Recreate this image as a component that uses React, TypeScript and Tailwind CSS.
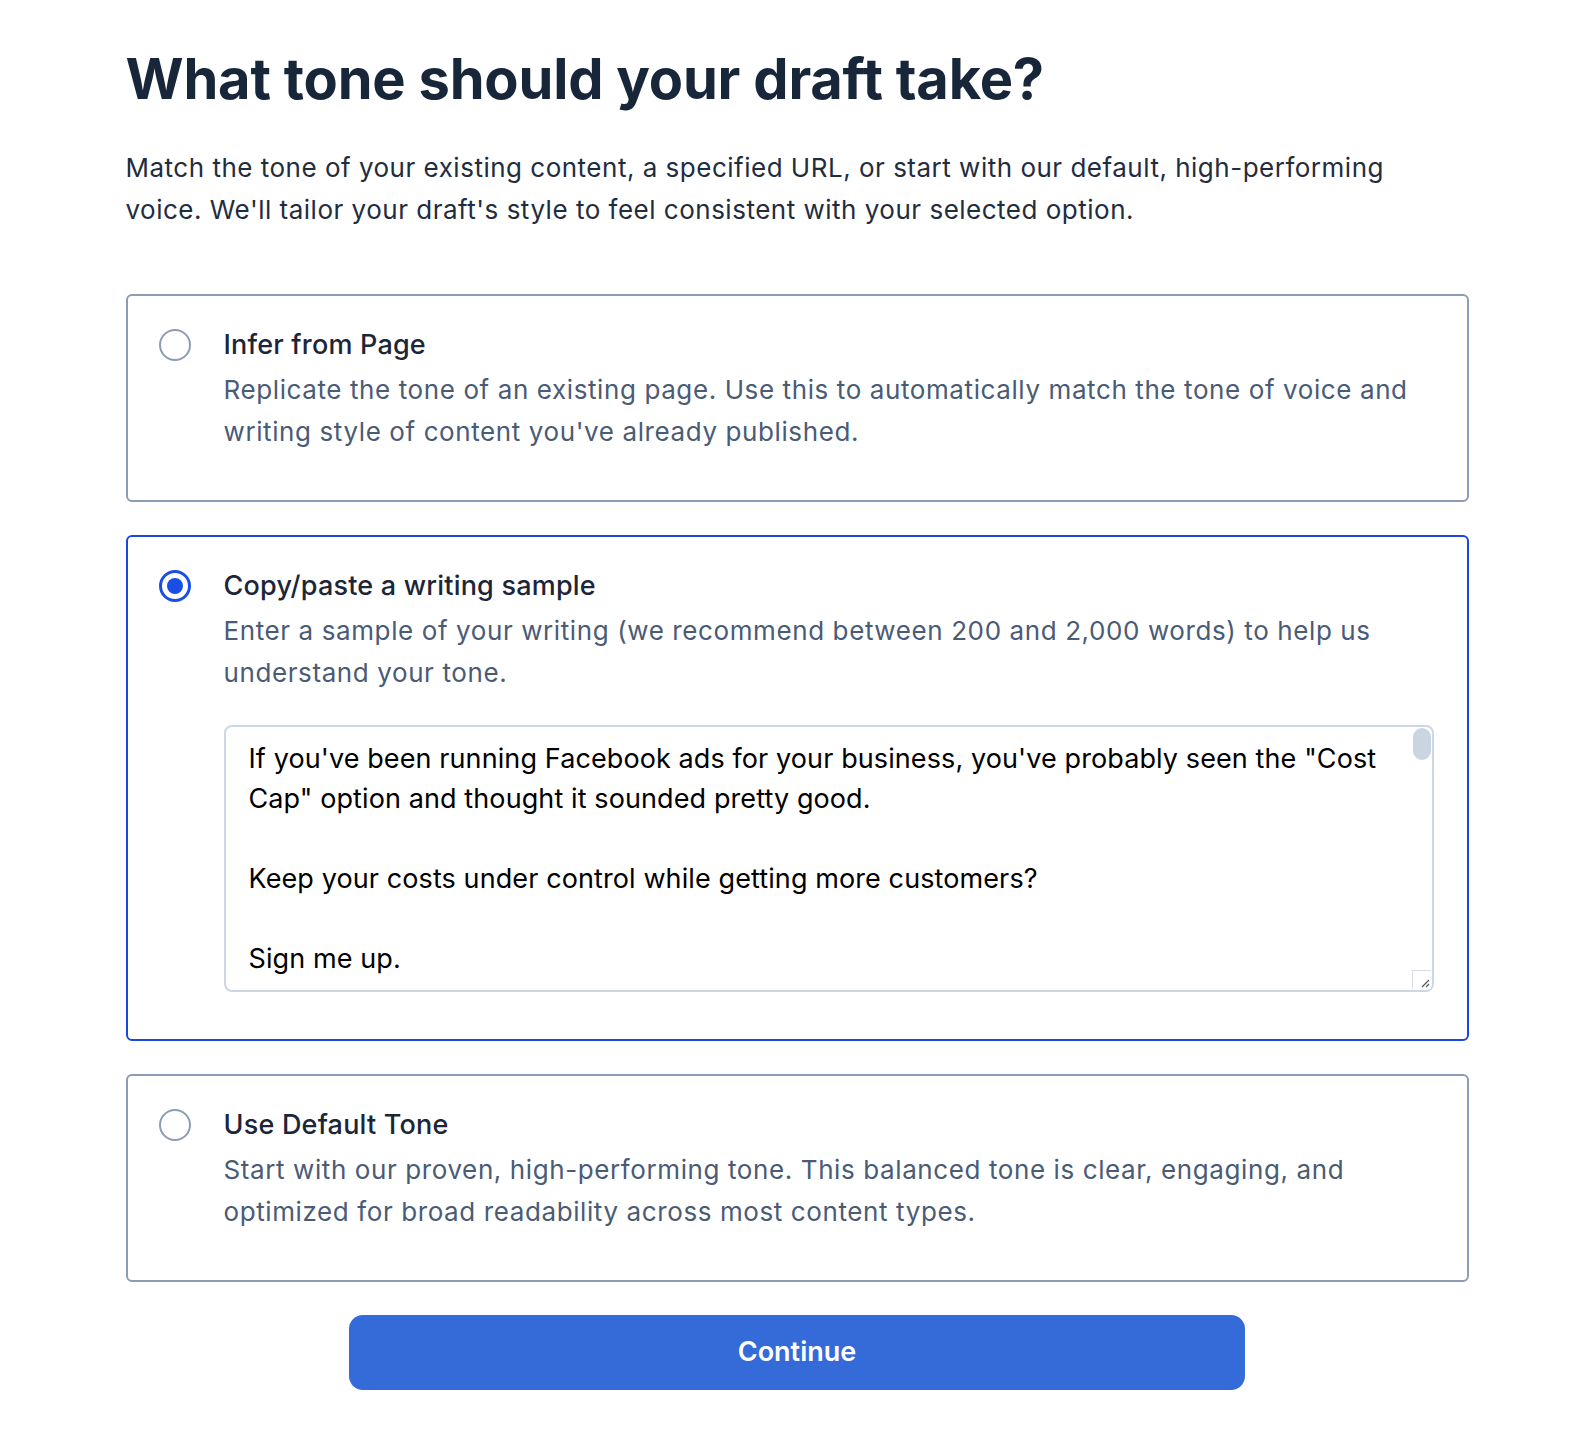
import React, { useState } from 'react';

const options = [
  {
    id: 'page',
    title: 'Infer from Page',
    desc: "Replicate the tone of an existing page. Use this to automatically match the tone of voice and writing style of content you've already published.",
  },
  {
    id: 'sample',
    title: 'Copy/paste a writing sample',
    desc: 'Enter a sample of your writing (we recommend between 200 and 2,000 words) to help us understand your tone.',
  },
  {
    id: 'default',
    title: 'Use Default Tone',
    desc: 'Start with our proven, high-performing tone. This balanced tone is clear, engaging, and optimized for broad readability across most content types.',
  },
];

const sampleText = `If you've been running Facebook ads for your business, you've probably seen the "Cost Cap" option and thought it sounded pretty good.

Keep your costs under control while getting more customers?

Sign me up.

But here's the thing most people don't realize until it's too late.`;

function Radio({ checked }: { checked: boolean }) {
  return checked ? (
    <span className="flex h-[32px] w-[32px] shrink-0 items-center justify-center rounded-full border-[3px] border-[#1a4ee6]">
      <span className="h-[16px] w-[16px] rounded-full bg-[#1a4ee6]" />
    </span>
  ) : (
    <span className="h-[32px] w-[32px] shrink-0 rounded-full border-2 border-[#8d9cb6]" />
  );
}

export default function App() {
  const [selected, setSelected] = useState('sample');

  return (
    <div className="min-h-screen bg-white font-['Inter',sans-serif]">
      <main className="mx-auto w-[1343px] pt-[46px] pb-10 relative left-[3px]">
        <h1 className="text-[56px] leading-[66px] font-bold tracking-[-0.2px] text-[#18263a]">
          What tone should your draft take?
        </h1>
        <p className="mt-[35px] max-w-[1300px] text-[26px] leading-[42px] tracking-[0.5px] text-[#1f2d40]">
          Match the tone of your existing content, a specified URL, or start with our default, high-performing voice. We'll tailor your draft's style to feel consistent with your selected option.
        </p>

        <div className="mt-[63px] flex flex-col gap-[33px]">
          {options.map((opt) => {
            const active = selected === opt.id;
            return (
              <div
                key={opt.id}
                onClick={() => setSelected(opt.id)}
                className={`cursor-pointer rounded-[6px] border-2 pl-[31px] pr-[33px] pt-[27px] pb-[47px] ${
                  active ? 'border-[#1b47e0]' : 'border-[#8d9cb6]'
                }`}
              >
                <div className="flex items-center gap-[33px]">
                  <Radio checked={active} />
                  <span className="text-[27px] leading-[44px] font-medium tracking-[0.2px] text-[#1b2638]">{opt.title}</span>
                </div>
                <p className="ml-[65px] mt-[2px] text-[26px] leading-[42px] tracking-[0.6px] text-[#4a5b76]">{opt.desc}</p>
                {opt.id === 'sample' && active && (
                  <div className="relative ml-[65px] mt-[31px] h-[267px] rounded-[8px] border-2 border-[#cdd7e3]">
                    <textarea
                      readOnly
                      defaultValue={sampleText}
                      className="h-full w-full resize-none overflow-hidden rounded-[8px] bg-transparent pl-[23px] pr-[36px] pt-[12px] font-['Inter',sans-serif] text-[27px] leading-[40px] tracking-[0.1px] text-black outline-none"
                    />
                    <span className="absolute right-[1px] top-[1px] h-[32px] w-[18px] rounded-full bg-[#c9d5e1]" />
                    <span className="absolute bottom-[1px] right-[1px] flex h-[19px] w-[19px] items-end justify-end border-l border-t border-[#d8dde3] bg-white">
                      <svg width="12" height="12" viewBox="0 0 12 12" className="mb-[1px] mr-[1px]">
                        <path d="M11 4 L4 11 M11 8 L8 11" stroke="#555" strokeWidth="1.2" />
                      </svg>
                    </span>
                  </div>
                )}
              </div>
            );
          })}
        </div>

        <div className="mt-[33px] flex justify-center">
          <button className="h-[75px] w-[896px] rounded-[14px] bg-[#356bd8] text-[27px] font-semibold text-white">
            Continue
          </button>
        </div>
      </main>
    </div>
  );
}
